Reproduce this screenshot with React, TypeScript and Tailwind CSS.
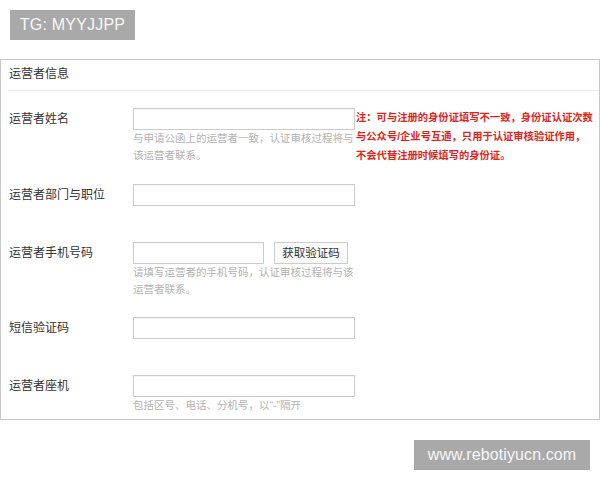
import React from "react";

const FONT = { fontFamily: '"Liberation Sans", "Noto Sans CJK SC", sans-serif' };

function Input({ w }: { w: string }) {
  return <div className={`${w} h-[22px] border border-[#cccccc] bg-white shadow-[inset_0_1px_1px_rgba(0,0,0,0.04)]`} />;
}

function Hint({ lines }: { lines: string[] }) {
  return (
    <div className="min-h-[17px] text-[10.5px] leading-[17px] text-[#b3b3b3] whitespace-nowrap">
      {lines.map((l, i) => (
        <div key={i}>{l}</div>
      ))}
    </div>
  );
}

function Label({ children }: { children: React.ReactNode }) {
  return <div className="w-[124px] shrink-0 h-[22px] leading-[22px] text-[12px] text-[#333333]">{children}</div>;
}

export default function App() {
  return (
    <div className="w-[600px] h-[480px] bg-white" style={FONT}>
      <div className="pt-[10px] pl-[10px]">
        <div className="w-[125px] h-[30px] bg-[#a9a9a9] text-center text-[16px] leading-[30px] tracking-[0.2px] text-[#f7f7f7]">TG: MYYJJPP</div>
      </div>
      <div className="mt-[19px] w-[600px] border border-[#c8c8c8] pb-[5px]">
        <div className="ml-[8px] h-[31px] border-b border-[#ebebeb] text-[12px] leading-[28px] text-[#333333]">运营者信息</div>
        <div className="pl-[8px] pt-[17px] flex flex-col gap-[19px]">
          <div className="flex items-start">
            <Label>运营者姓名</Label>
            <div className="w-[222px] shrink-0">
              <Input w="w-[222px]" />
              <Hint lines={["与申请公函上的运营者一致，认证审核过程将与", "该运营者联系。"]} />
            </div>
            <div className="ml-[1px] text-[10.3px] leading-[19px] font-bold text-[#e0241c] whitespace-nowrap">
              <div>注：可与注册的身份证填写不一致，身份证认证次数</div>
              <div>与公众号/企业号互通，只用于认证审核验证作用，</div>
              <div>不会代替注册时候填写的身份证。</div>
            </div>
          </div>
          <div className="flex items-start">
            <Label>运营者部门与职位</Label>
            <div>
              <Input w="w-[222px]" />
              <Hint lines={[]} />
            </div>
          </div>
          <div className="flex items-start">
            <Label>运营者手机号码</Label>
            <div>
              <div className="flex gap-[10px]">
                <Input w="w-[131px]" />
                <button className="w-[74px] h-[22px] border border-[#cccccc] bg-[#fafafa] text-[11.5px] leading-[20px] text-[#333333]">获取验证码</button>
              </div>
              <Hint lines={["请填写运营者的手机号码，认证审核过程将与该", "运营者联系。"]} />
            </div>
          </div>
          <div className="flex items-start">
            <Label>短信验证码</Label>
            <div>
              <Input w="w-[222px]" />
              <Hint lines={[]} />
            </div>
          </div>
          <div className="flex items-start">
            <Label>运营者座机</Label>
            <div>
              <Input w="w-[222px]" />
              <Hint lines={["包括区号、电话、分机号，以“-”隔开"]} />
            </div>
          </div>
        </div>
      </div>
      <div className="flex justify-end pr-[10px] mt-[20px]">
        <div className="w-[176px] h-[30px] bg-[#a9a9a9] text-center text-[16px] leading-[30px] tracking-[0.1px] text-[#f7f7f7]">www.rebotiyucn.com</div>
      </div>
    </div>
  );
}
